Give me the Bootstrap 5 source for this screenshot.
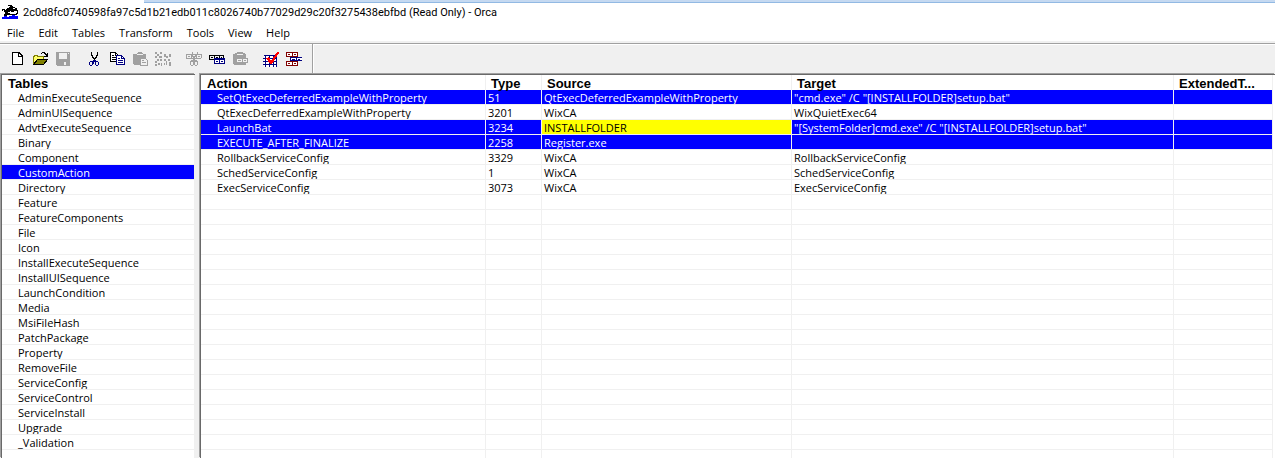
<!DOCTYPE html>
<html lang="en">
<head>
<meta charset="utf-8">
<meta name="viewport" content="width=device-width, initial-scale=1">
<title>Orca</title>
<link href="https://cdn.jsdelivr.net/npm/bootstrap@5.3.0/dist/css/bootstrap.min.css" rel="stylesheet">
<style>
  :root { --face: #f0f0f0; --line: #a0a0a0; --edge: #696969; --pick: #0000ff; }
  body { font: 11px/15px "Open Sans", "Noto Sans", sans-serif; color: #000; background: #fff; }
  .app { padding-bottom: 3px; }
  .behind { height: 3px; margin-left: 144px; background: #c5d9f1; border-bottom: 1px solid #92b9e3; }
  .title-row { height: 20px; padding-left: 2px; gap: 5px; font: 11px/19px Roboto, sans-serif; }
  .menu-row { height: 20px; padding-left: 7px; gap: 14px; border-bottom: 2px solid var(--face); }
  .menu-row a { color: #000; text-decoration: none; line-height: 20px; }
  .tools { height: 30px; padding-left: 6px; background: var(--face); border-top: 1px solid var(--line); box-shadow: inset 0 1px #fff; }
  .tools .group { margin-right: 8px; }
  .tools .group:nth-last-child(2) { margin-right: 6px; }
  .tools button { width: 23px; padding: 7px 4px 6px 3px; border: 0; background: none; line-height: 0; }
  .tools .rule { width: 2px; border-left: 1px solid var(--line); background: #fff; }
  .tools svg, .title-row svg { width: 16px; height: 16px; }
  .panes { background: var(--face); }
  .pane { background: #fff; border: solid var(--edge); border-width: 1px 0 0 1px; box-shadow: -1px -1px var(--line); margin-top: 1px; }
  .tables-pane { width: 194px; margin-left: 1px; }
  .rows-pane { margin-left: 5px; padding-right: 2px; }
  .grid { width: 100%; table-layout: fixed; border-collapse: separate; border-spacing: 0; }
  .grid th { height: 15px; padding: 0 0 0 5px; font: bold 13px/15px "Liberation Sans", Arial, sans-serif; border-right: 1px solid var(--face); }
  .grid th:first-child { padding-left: 6px; }
  .grid th span { display: block; height: 15px; line-height: 17px; }
  .grid td { height: 15px; padding: 2px 0 0 2px; line-height: 12px; white-space: nowrap; overflow: hidden; border: solid var(--face); border-width: 0 1px 1px 0; }
  .grid td:first-child { padding-left: 16px; }
  .grid .picked td { background: var(--pick); color: #fff; }
  .grid .picked .key { background: #ff0; color: #000; }
  .c-action { width: 285px; } .c-type { width: 56px; } .c-source { width: 250px; } .c-target { width: 382px; }
</style>
</head>
<body>
<div class="app d-flex flex-column vh-100 overflow-hidden">
  <div class="behind flex-shrink-0"></div>
  <header class="title-row d-flex flex-shrink-0 align-items-start">
    <svg viewBox="0 0 16 16" aria-hidden="true" shape-rendering="crispEdges">
      <path d="M0 6h3v1h1V6h1V5h2V4h1V3H6V2h4v1h1v1h2v1h2v2h1v4h-1v1H5v1H2v-2h1V9H2V8H0z" fill="#000"/>
      <path d="M6 9h2V8h1v1h3V8h3v2h-1v1H8v-1H6z" fill="#fff"/><path d="M11 5h2v1h-2zM1 7h1v1H1z" fill="#fff"/>
      <path d="M0 14h2v-1h3v1h2v-1h3v-1h3v1h3v3H0z" fill="#00f"/>
    </svg>
    <span class="text-truncate">2c0d8fc0740598fa97c5d1b21edb011c8026740b77029d29c20f3275438ebfbd (Read Only) - Orca</span>
  </header>
  <nav class="menu-row d-flex flex-shrink-0">
    <a href="#">File</a><a href="#">Edit</a><a href="#">Tables</a><a href="#">Transform</a><a href="#">Tools</a><a href="#">View</a><a href="#">Help</a>
  </nav>
  <div class="tools d-flex flex-shrink-0" role="toolbar" aria-label="Standard">
    <div class="group d-flex">
      <button type="button" aria-label="New"><svg viewBox="0 0 16 16" shape-rendering="crispEdges"><path d="M3.5 1.5h7v1h1v1h1v1h1v9h-10z" fill="#fff" stroke="#000"/><path d="M9.5 1v4.500h4" fill="none" stroke="#000"/></svg></button>
      <button type="button" aria-label="Open"><svg viewBox="0 0 16 16" shape-rendering="crispEdges"><path d="M1.500 13.500V5.500h1v-1h3v1h6v3" fill="#ffff80" stroke="#808000"/><path d="M2 6h9v3H6l-4 4z" fill="#ff6"/><path d="M1.500 13.500l4-5h10l-4 5z" fill="#808000" stroke="#000"/><path d="M9 2h1V1h3v1h1v1h1V2h1v4h-4V5h2V4h-1V3h-1V2h-2v1H9z" fill="#000"/></svg></button>
      <button type="button" aria-label="Save" disabled><svg viewBox="0 0 16 16" shape-rendering="crispEdges"><path d="M1 1h14v14H2v-1H1zM4 2v6h8V2zM9 11v3h2v-3z" fill="#a0a0a0" fill-rule="evenodd"/><path d="M13 2h1v1h-1z" fill="#f0f0f0"/></svg></button>
    </div>
    <div class="group d-flex">
      <button type="button" aria-label="Cut"><svg viewBox="0 0 16 16" shape-rendering="crispEdges"><path d="M5 1h1v3h1v2h1v1h1V6h1V4h1V1h1v4h-1v2h-1v1H9v2H8V8H7V7H6V5H5z" fill="#000"/><path d="M7 9h3v1h2v1h1v3h-1v1h-2v-1H9v-3H8v2H7v1H6v1H4v-1H3v-3h1v-1h3zM4 11v3h2v-3zM10 11v3h2v-3z" fill="#000080" fill-rule="evenodd"/></svg></button>
      <button type="button" aria-label="Copy"><svg viewBox="0 0 16 16" shape-rendering="crispEdges"><path d="M1.500 1.500h5l3 3v6h-8z" fill="#fff" stroke="#000"/><path d="M6.500 1v3.500h3M3 4.500h2M3 6.500h4M3 8.500h4" fill="none" stroke="#000"/><path d="M7.500 4.500h5l3 3v6h-8z" fill="#fff" stroke="#000080"/><path d="M12.500 4v3.500h3M9 7.500h2M9 9.500h5M9 11.500h5" fill="none" stroke="#000080"/></svg></button>
      <button type="button" aria-label="Paste" disabled><svg viewBox="0 0 16 16" shape-rendering="crispEdges"><path d="M1 3h4V2h1V1h4v1h1v1h3v4H8v7H2v-1H1z" fill="#a0a0a0"/><path d="M5 3h6v1H5z" fill="#f0f0f0"/><path d="M8.500 7.500h5l2 2v5h-7z" fill="#f0f0f0" stroke="#a0a0a0"/><path d="M10 9.500h2M10 11.500h4" stroke="#a0a0a0"/></svg></button>
      <button type="button" aria-label="Clear" disabled><svg viewBox="0 0 16 16" shape-rendering="crispEdges"><path d="M0 1h2v2H0zM2 3h2v2H2zM5 1h2v2H5zM4 5h3v2H4zM0 5h2v2H0zM9 3h2v3H9zM11 5h2v2h-2zM14 3h2v3h-2zM2 8h2v2H2zM5 8h2v2H5zM0 10h2v2H0zM0 13h2v2H0zM3 12h2v2H3zM6 12h1v3H6zM9 8h2v2H9zM13 8h2v2h-2zM11 10h1v4h-1zM9 12h1v2H9zM14 11h2v4h-2z" fill="#a0a0a0"/></svg></button>
    </div>
    <div class="group d-flex">
      <button type="button" aria-label="Cut Row" disabled><svg viewBox="0 0 16 16" shape-rendering="crispEdges"><path d="M0 3.500h16M0 7.500h15M.5 3v5M5.500 3v5M10.500 3v5M15.500 3v4M6 1v2l2 5 3-5V1" fill="none" stroke="#a0a0a0"/><path d="M2 5.500h2M7 5.500h2M12 5.500h2" stroke="#a0a0a0"/><path d="M7 8h2v1h2v1h1v4h-1v1H9v-1H8v-3v3H7v1H5v-1H4v-4h1V9h2zM5 11v3h2v-3zM9 11v3h2v-3z" fill="#a0a0a0" fill-rule="evenodd"/></svg></button>
      <button type="button" aria-label="Copy Row"><svg viewBox="0 0 16 16" shape-rendering="crispEdges"><path d="M.5 8.500v-4h14v3M5.500 4v4M10.500 4v3M0 8.500h5M2 6.500h2M7 6.500h2M12 6.500h1" fill="none" stroke="#000"/><path d="M5.500 8.500h10v4h-10zM10.500 8v5M7 10.500h2M12 10.500h2M5 7.500h11" fill="#fff" stroke="#000080"/></svg></button>
      <button type="button" aria-label="Paste Row" disabled><svg viewBox="0 0 16 16" shape-rendering="crispEdges"><path d="M1 3h2V2h2V1h6v1h2v1h1v11H2v-1H1z" fill="#a0a0a0"/><path d="M5 3h6v1H5z" fill="#f0f0f0"/><path d="M4.500 7.500h11v4h-11zM10.500 7v5M6 9.500h3M12 9.500h2" fill="#f0f0f0" stroke="#a0a0a0"/></svg></button>
    </div>
    <div class="group d-flex">
      <button type="button" aria-label="Validate"><svg viewBox="0 0 16 16" shape-rendering="crispEdges"><path d="M1 4h13v12H1z" fill="#fff"/><path d="M1 4.500h13M0 7.500h14M0 10.500h14M0 13.500h14M2.500 4v12M6.500 4v12M10.500 4v12M13.500 4v12" fill="none" stroke="#000080"/><path d="M3 7l3-1 2 4 6-9h2v1L9 13H7z" fill="#f00"/></svg></button>
      <button type="button" aria-label="Dialog Preview"><svg viewBox="0 0 16 16" shape-rendering="crispEdges"><path d="M.5 1.500h11v4H.5zM6 1v5M.5 10.500h11v4H.5zM6 10v5" fill="#fff" stroke="#800000"/><path d="M2 3.500h2M8 3.500h2M2 12.500h2M8 12.500h2" stroke="#800000"/><path d="M16 6.500H4.500v3H16M10.500 6v4" fill="#fff" stroke="#000080"/><path d="M6 8h3M12 8h2" stroke="#000080"/></svg></button>
    </div>
    <div class="rule"></div>
  </div>
  <main class="panes d-flex flex-grow-1 overflow-hidden">
    <section class="pane tables-pane flex-shrink-0">
      <table class="grid">
        <thead><tr><th scope="col"><span>Tables</span></th></tr></thead>
        <tbody>
          <tr><td>AdminExecuteSequence</td></tr><tr><td>AdminUISequence</td></tr><tr><td>AdvtExecuteSequence</td></tr>
          <tr><td>Binary</td></tr><tr><td>Component</td></tr><tr class="picked"><td>CustomAction</td></tr>
          <tr><td>Directory</td></tr><tr><td>Feature</td></tr><tr><td>FeatureComponents</td></tr>
          <tr><td>File</td></tr><tr><td>Icon</td></tr><tr><td>InstallExecuteSequence</td></tr>
          <tr><td>InstallUISequence</td></tr><tr><td>LaunchCondition</td></tr><tr><td>Media</td></tr>
          <tr><td>MsiFileHash</td></tr><tr><td>PatchPackage</td></tr><tr><td>Property</td></tr>
          <tr><td>RemoveFile</td></tr><tr><td>ServiceConfig</td></tr><tr><td>ServiceControl</td></tr>
          <tr><td>ServiceInstall</td></tr><tr><td>Upgrade</td></tr><tr><td>_Validation</td></tr><tr><td></td></tr>
        </tbody>
      </table>
    </section>
    <section class="pane rows-pane flex-grow-1">
      <table class="grid">
        <colgroup><col class="c-action"><col class="c-type"><col class="c-source"><col class="c-target"><col></colgroup>
        <thead><tr><th scope="col"><span>Action</span></th><th scope="col"><span>Type</span></th><th scope="col"><span>Source</span></th><th scope="col"><span>Target</span></th><th scope="col"><span>ExtendedT...</span></th></tr></thead>
        <tbody>
          <tr class="picked"><td>SetQtExecDeferredExampleWithProperty</td><td>51</td><td>QtExecDeferredExampleWithProperty</td><td>"cmd.exe" /C "[INSTALLFOLDER]setup.bat"</td><td></td></tr>
          <tr><td>QtExecDeferredExampleWithProperty</td><td>3201</td><td>WixCA</td><td>WixQuietExec64</td><td></td></tr>
          <tr class="picked"><td>LaunchBat</td><td>3234</td><td class="key">INSTALLFOLDER</td><td>"[SystemFolder]cmd.exe" /C "[INSTALLFOLDER]setup.bat"</td><td></td></tr>
          <tr class="picked"><td>EXECUTE_AFTER_FINALIZE</td><td>2258</td><td>Register.exe</td><td></td><td></td></tr>
          <tr><td>RollbackServiceConfig</td><td>3329</td><td>WixCA</td><td>RollbackServiceConfig</td><td></td></tr>
          <tr><td>SchedServiceConfig</td><td>1</td><td>WixCA</td><td>SchedServiceConfig</td><td></td></tr>
          <tr><td>ExecServiceConfig</td><td>3073</td><td>WixCA</td><td>ExecServiceConfig</td><td></td></tr>
        </tbody>
        <tbody aria-hidden="true">
          <tr><td></td><td></td><td></td><td></td><td></td></tr><tr><td></td><td></td><td></td><td></td><td></td></tr>
          <tr><td></td><td></td><td></td><td></td><td></td></tr><tr><td></td><td></td><td></td><td></td><td></td></tr>
          <tr><td></td><td></td><td></td><td></td><td></td></tr><tr><td></td><td></td><td></td><td></td><td></td></tr>
          <tr><td></td><td></td><td></td><td></td><td></td></tr><tr><td></td><td></td><td></td><td></td><td></td></tr>
          <tr><td></td><td></td><td></td><td></td><td></td></tr><tr><td></td><td></td><td></td><td></td><td></td></tr>
          <tr><td></td><td></td><td></td><td></td><td></td></tr><tr><td></td><td></td><td></td><td></td><td></td></tr>
          <tr><td></td><td></td><td></td><td></td><td></td></tr><tr><td></td><td></td><td></td><td></td><td></td></tr>
          <tr><td></td><td></td><td></td><td></td><td></td></tr><tr><td></td><td></td><td></td><td></td><td></td></tr>
          <tr><td></td><td></td><td></td><td></td><td></td></tr><tr><td></td><td></td><td></td><td></td><td></td></tr>
        </tbody>
      </table>
    </section>
  </main>
</div>
<script src="https://cdn.jsdelivr.net/npm/bootstrap@5.3.0/dist/js/bootstrap.bundle.min.js"></script>
</body>
</html>
